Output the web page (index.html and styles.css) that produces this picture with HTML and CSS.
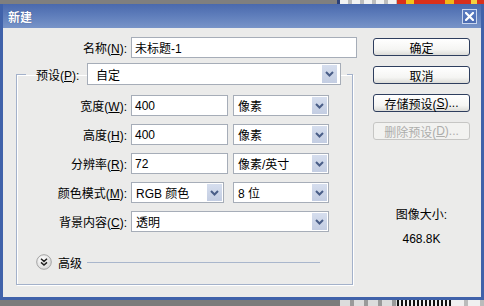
FILE: index.html
```html
<!DOCTYPE html>
<html lang="zh">
<head>
<meta charset="utf-8">
<link rel="stylesheet" href="styles.css">
</head>
<body>
<div class="strip strip-top">
  <span class="s-gray"></span><span class="s-line"></span><span class="s-check"></span><span class="s-red"></span>
</div>
<div class="window">
  <div class="titlebar">
    <span class="title">新建</span>
    <span class="close"><svg width="9" height="9" viewBox="0 0 9 9"><path d="M1 1 L8 8 M8 1 L1 8" stroke="#fff" stroke-width="2.2" stroke-linecap="square"/></svg></span>
  </div>
  <div class="content">
    <div class="left">
      <div class="name-row">
        <label class="lbl">名称(<u>N</u>):</label>
        <div class="field w-name">未标题-1</div>
      </div>
      <fieldset class="group">
        <legend class="legend">
          <label class="lbl-legend">预设(<u>P</u>):</label>
          <div class="field select w-preset"><span class="val">自定</span><i class="arrow"><svg width="9" height="6" viewBox="0 0 9 6"><path d="M1 1 L4.5 4.5 L8 1" fill="none" stroke="#4a5e88" stroke-width="2"/></svg></i></div>
        </legend>
        <div class="rows">
          <div class="row">
            <label class="lbl">宽度(<u>W</u>):</label>
            <div class="pair">
              <div class="field w-num">400</div>
              <div class="field select w-unit"><span class="val">像素</span><i class="arrow"><svg width="9" height="6" viewBox="0 0 9 6"><path d="M1 1 L4.5 4.5 L8 1" fill="none" stroke="#4a5e88" stroke-width="2"/></svg></i></div>
            </div>
          </div>
          <div class="row">
            <label class="lbl">高度(<u>H</u>):</label>
            <div class="pair">
              <div class="field w-num">400</div>
              <div class="field select w-unit"><span class="val">像素</span><i class="arrow"><svg width="9" height="6" viewBox="0 0 9 6"><path d="M1 1 L4.5 4.5 L8 1" fill="none" stroke="#4a5e88" stroke-width="2"/></svg></i></div>
            </div>
          </div>
          <div class="row">
            <label class="lbl">分辨率(<u>R</u>):</label>
            <div class="pair">
              <div class="field w-num">72</div>
              <div class="field select w-unit"><span class="val">像素/英寸</span><i class="arrow"><svg width="9" height="6" viewBox="0 0 9 6"><path d="M1 1 L4.5 4.5 L8 1" fill="none" stroke="#4a5e88" stroke-width="2"/></svg></i></div>
            </div>
          </div>
          <div class="row">
            <label class="lbl">颜色模式(<u>M</u>):</label>
            <div class="pair">
              <div class="field select w-mode"><span class="val">RGB 颜色</span><i class="arrow"><svg width="9" height="6" viewBox="0 0 9 6"><path d="M1 1 L4.5 4.5 L8 1" fill="none" stroke="#4a5e88" stroke-width="2"/></svg></i></div>
              <div class="field select w-unit"><span class="val">8 位</span><i class="arrow"><svg width="9" height="6" viewBox="0 0 9 6"><path d="M1 1 L4.5 4.5 L8 1" fill="none" stroke="#4a5e88" stroke-width="2"/></svg></i></div>
            </div>
          </div>
          <div class="row">
            <label class="lbl">背景内容(<u>C</u>):</label>
            <div class="field select w-bg"><span class="val">透明</span><i class="arrow"><svg width="9" height="6" viewBox="0 0 9 6"><path d="M1 1 L4.5 4.5 L8 1" fill="none" stroke="#4a5e88" stroke-width="2"/></svg></i></div>
          </div>
        </div>
        <div class="advanced">
          <svg class="adv-icon" width="16" height="16" viewBox="0 0 16 16">
            <defs><radialGradient id="g" cx="0.4" cy="0.35" r="0.7"><stop offset="0" stop-color="#ffffff"/><stop offset="1" stop-color="#d6d6d6"/></radialGradient></defs>
            <circle cx="8" cy="8" r="7.3" fill="url(#g)" stroke="#a4a4a4" stroke-width="1"/>
            <path d="M5 4.8 L8 7.4 L11 4.8 M5 8.4 L8 11 L11 8.4" fill="none" stroke="#222" stroke-width="1.5"/>
          </svg>
          <span class="adv-text">高级</span>
          <span class="adv-line"></span>
        </div>
      </fieldset>
    </div>
    <div class="right">
      <div class="btn">确定</div>
      <div class="btn">取消</div>
      <div class="btn">存储预设(<u>S</u>)...</div>
      <div class="btn disabled">删除预设(<u>D</u>)...</div>
      <div class="info">图像大小:</div>
      <div class="info size">468.8K</div>
    </div>
  </div>
</div>
<div class="strip strip-bottom">
  <span class="b-gray"></span><span class="b-check"></span><span class="b-stripes"></span><span class="b-light"></span>
</div>
</body>
</html>
```

FILE: styles.css
```css
html, body {
  margin: 0;
  padding: 0;
}
body {
  width: 484px;
  height: 306px;
  overflow: hidden;
  background: #7d7d7d;
  font-family: "Liberation Sans", "Noto Sans CJK SC", sans-serif;
  font-size: 12px;
  color: #000;
}
.strip {
  display: flex;
}
.strip-top {
  height: 4px;
}
.s-gray {
  width: 337px;
  background: #7f7f7f;
}
.s-line {
  width: 3px;
  background: #2a3f78;
}
.s-check {
  width: 57px;
  background: repeating-linear-gradient(90deg, #f2f2f2 0 8px, #bdbdbd 8px 12px);
}
.s-red {
  flex: 1;
  background: linear-gradient(90deg, #d9301c 0 10%, #f2c41c 10% 20%, #d9301c 20% 55%, #f0b818 55% 65%, #d9301c 65% 85%, #f4d040 85% 92%, #d9301c 92%);
}

.window {
  height: 296px;
  box-sizing: border-box;
  border: 3px solid #4062aa;
  border-top: 0;
  background: #ebebea;
  display: flex;
  flex-direction: column;
}
.titlebar {
  height: 24px;
  flex: none;
  background: linear-gradient(180deg, #4a69ad 0%, #5d7cba 45%, #7894c8 100%);
  display: flex;
  align-items: center;
  justify-content: space-between;
  padding: 0 4px 0 5px;
  color: #fff;
}
.title {
  font-weight: bold;
  font-size: 12px;
  text-shadow: 0 0 1px #2b447c;
}
.close {
  width: 15px;
  height: 15px;
  box-sizing: border-box;
  border: 1px solid #c9d6ee;
  background: linear-gradient(#5a7bc0, #4d6db2);
  display: flex;
  align-items: center;
  justify-content: center;
}

.content {
  flex: 1;
  display: flex;
  padding-top: 9px;
}
.left {
  width: 354px;
  flex: none;
}
.right {
  width: 97px;
  margin-left: 16px;
  padding-top: 1px;
  display: flex;
  flex-direction: column;
}

.lbl {
  text-align: right;
  margin-right: 4px;
  white-space: nowrap;
  flex: none;
}
.name-row {
  display: flex;
  align-items: center;
  height: 21px;
}
.name-row .lbl {
  width: 124px;
}
.field {
  height: 21px;
  box-sizing: border-box;
  border: 1px solid #a6adb8;
  background: #fff;
  padding-left: 3px;
  display: flex;
  align-items: center;
  white-space: nowrap;
  flex: none;
}
.select {
  justify-content: space-between;
  padding-right: 1px;
}
.select .val {
  padding-left: 1px;
}
.arrow {
  width: 15px;
  height: 17px;
  background: linear-gradient(#d6deee, #c3cde2);
  display: flex;
  align-items: center;
  justify-content: center;
}
.w-name { width: 226px; }
.w-preset { width: 254px; height: 22px; padding-left: 7px; }
.w-preset .arrow { height: 18px; margin-right: 2px; }
.w-num { width: 97px; }
.w-unit { width: 96px; }
.w-mode { width: 93px; }
.w-bg { width: 198px; }

.group {
  margin: 5px 0 0 13px;
  width: 337px;
  box-sizing: border-box;
  padding: 10px 0 14px 0;
  border: 1px solid #a3b1ca;
  box-shadow: inset 1px 1px 0 #fff, 1px 1px 0 #fff;
  min-width: 0;
}
.legend {
  margin-left: 9px;
  padding: 0 6px 0 10px;
  display: flex;
  align-items: center;
  height: 22px;
}
.lbl-legend {
  width: 46px;
  margin-right: 5px;
  white-space: nowrap;
}
.rows {
  display: flex;
  flex-direction: column;
  gap: 8px;
}
.row {
  display: flex;
  align-items: center;
  height: 21px;
}
.row .lbl {
  width: 110px;
}
.pair {
  width: 198px;
  display: flex;
  justify-content: space-between;
}
.advanced {
  margin-top: 22px;
  height: 16px;
  padding-left: 19px;
  display: flex;
  align-items: center;
}
.adv-icon {
  flex: none;
}
.adv-text {
  margin-left: 6px;
}
.adv-line {
  flex: 1;
  height: 1px;
  background: #a9b6cc;
  margin: 0 32px 0 5px;
}

.btn {
  height: 18px;
  box-sizing: border-box;
  border: 1px solid #2e3e5e;
  border-radius: 3px;
  background: linear-gradient(#ffffff, #f5f5f3 65%, #dcdcd8);
  display: flex;
  align-items: center;
  justify-content: center;
  white-space: nowrap;
}
.btn + .btn {
  margin-top: 10px;
}
.btn.disabled {
  border-color: #c6c6c4;
  color: #adadab;
  background: #f2f2f0;
}
.info {
  text-align: center;
  line-height: 14px;
  margin-top: 68px;
}
.info.size {
  margin-top: 10px;
}

.strip-bottom {
  height: 6px;
}
.b-gray {
  width: 340px;
  background: #7b7b7b;
}
.b-check {
  width: 57px;
  background: repeating-linear-gradient(90deg, #dcdcdc 0 10px, #9a9a9a 10px 14px);
}
.b-stripes {
  width: 55px;
  background: repeating-linear-gradient(90deg, #111 0 2px, #eee 2px 4px);
}
.b-light {
  flex: 1;
  background: repeating-linear-gradient(90deg, #f0f0f0 0 12px, #bbb 12px 16px);
}
```
